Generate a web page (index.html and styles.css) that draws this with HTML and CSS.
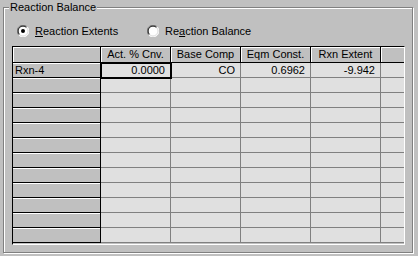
FILE: index.html
```html
<!DOCTYPE html>
<html lang="en">
<head>
  <meta charset="UTF-8" />
  <title>Reaction Balance</title>
  <link rel="stylesheet" href="styles.css">
</head>
<body>

  <div class="group">
    <span class="legend">Reaction Balance</span>

    <div class="options">
      <label class="option">
        <svg width="12" height="12" viewBox="0 0 12 12">
          <circle cx="6" cy="6" r="5.5" fill="#fff"/>
          <path d="M1.8 10.2 A5.5 5.5 0 0 1 10.2 1.8" fill="none" stroke="#808080"/>
          <path d="M10.2 1.8 A5.5 5.5 0 0 1 1.8 10.2" fill="none" stroke="#fff"/>
          <path d="M2.5 9.5 A4.5 4.5 0 0 1 9.5 2.5" fill="none" stroke="#000"/>
          <path d="M9.5 2.5 A4.5 4.5 0 0 1 2.5 9.5" fill="none" stroke="#dfdfdf"/>
          <circle cx="6" cy="6" r="2" fill="#000"/>
        </svg>
        <span><u>R</u>eaction Extents</span>
      </label>
      <label class="option">
        <svg width="12" height="12" viewBox="0 0 12 12">
          <circle cx="6" cy="6" r="5.5" fill="#fff"/>
          <path d="M1.8 10.2 A5.5 5.5 0 0 1 10.2 1.8" fill="none" stroke="#808080"/>
          <path d="M10.2 1.8 A5.5 5.5 0 0 1 1.8 10.2" fill="none" stroke="#fff"/>
          <path d="M2.5 9.5 A4.5 4.5 0 0 1 9.5 2.5" fill="none" stroke="#000"/>
          <path d="M9.5 2.5 A4.5 4.5 0 0 1 2.5 9.5" fill="none" stroke="#dfdfdf"/>
        </svg>
        <span>Re<u>a</u>ction Balance</span>
      </label>
    </div>

    <div class="grid">
      <table>
        <colgroup>
          <col class="c-head">
          <col class="c-data"><col class="c-data"><col class="c-data"><col class="c-data">
          <col class="c-rest">
        </colgroup>
        <thead>
          <tr>
            <th></th>
            <th>Act. % Cnv.</th>
            <th>Base Comp</th>
            <th>Eqm Const.</th>
            <th>Rxn Extent</th>
            <th class="rest"></th>
          </tr>
        </thead>
        <tbody>
          <tr><th>Rxn-4</th><td class="focus">0.0000</td><td>CO</td><td>0.6962</td><td>-9.942</td><td class="rest"></td></tr>
          <tr><th></th><td></td><td></td><td></td><td></td><td class="rest"></td></tr>
          <tr><th></th><td></td><td></td><td></td><td></td><td class="rest"></td></tr>
          <tr><th></th><td></td><td></td><td></td><td></td><td class="rest"></td></tr>
          <tr><th></th><td></td><td></td><td></td><td></td><td class="rest"></td></tr>
          <tr><th></th><td></td><td></td><td></td><td></td><td class="rest"></td></tr>
          <tr><th></th><td></td><td></td><td></td><td></td><td class="rest"></td></tr>
          <tr><th></th><td></td><td></td><td></td><td></td><td class="rest"></td></tr>
          <tr><th></th><td></td><td></td><td></td><td></td><td class="rest"></td></tr>
          <tr><th></th><td></td><td></td><td></td><td></td><td class="rest"></td></tr>
          <tr><th></th><td></td><td></td><td></td><td></td><td class="rest"></td></tr>
          <tr><th></th><td></td><td></td><td></td><td></td><td class="rest"></td></tr>
        </tbody>
      </table>
    </div>
  </div>

</body>
</html>
```

FILE: styles.css
```css
/* Ventana clásica de Windows, grupo "Reaction Balance" */
body {
  margin: 0;
  width: 418px;
  height: 256px;
  overflow: hidden;
  background-color: #c0c0c0;
  color: #000;
  font-family: "Liberation Sans", Arial, sans-serif;
  font-size: 11px;
}

.group {
  position: relative;
  margin: 7px 0 0 3px;
  width: 408px;
  height: 244px;
  border: 1px solid #808080;
  box-shadow: inset 1px 1px 0 #fff, 1px 1px 0 #fff;
}

.legend {
  position: absolute;
  top: -7px;
  left: 5px;
  padding: 0 1px;
  line-height: 13px;
  background-color: #c0c0c0;
}

.options {
  display: flex;
  padding: 17px 0 0 13px;
  height: 12px;
}

.option {
  display: flex;
  align-items: center;
  gap: 6px;
  width: 130px;
  line-height: 12px;
}

.option svg {
  display: block;
  flex: none;
}

.grid {
  margin: 9px 0 0 8px;
  width: 391px;
  padding-bottom: 1px;
  border: 1px solid;
  border-color: #000 #fff #fff #000;
  background-color: #c0c0c0;
}

table {
  table-layout: fixed;
  width: 391px;
  border-collapse: separate;
  border-spacing: 0;
}

.c-head { width: 88px; }
.c-data { width: 70px; }
.c-rest { width: 23px; }

th, td {
  padding: 0;
  height: 14px;
  line-height: 14px;
  font-weight: normal;
  white-space: nowrap;
  overflow: hidden;
}

thead th {
  height: 15px;
  line-height: 15px;
  text-align: center;
  background-color: #c0c0c0;
  border-right: 1px solid #000;
  border-bottom: 1px solid #000;
  box-shadow: inset 1px 1px 0 #fff;
}

tbody th {
  text-align: left;
  padding-left: 2px;
  background-color: #c0c0c0;
  border-right: 1px solid #000;
  border-bottom: 1px solid #000;
  box-shadow: inset 0 1px 0 #fff;
}

td {
  text-align: right;
  padding-right: 5px;
  background-color: #e0e0e0;
  border-right: 1px solid #808080;
  border-bottom: 1px solid #808080;
}

.rest {
  border-right: none;
}

td.focus {
  outline: 2px solid #000;
  outline-offset: -1px;
}
```
